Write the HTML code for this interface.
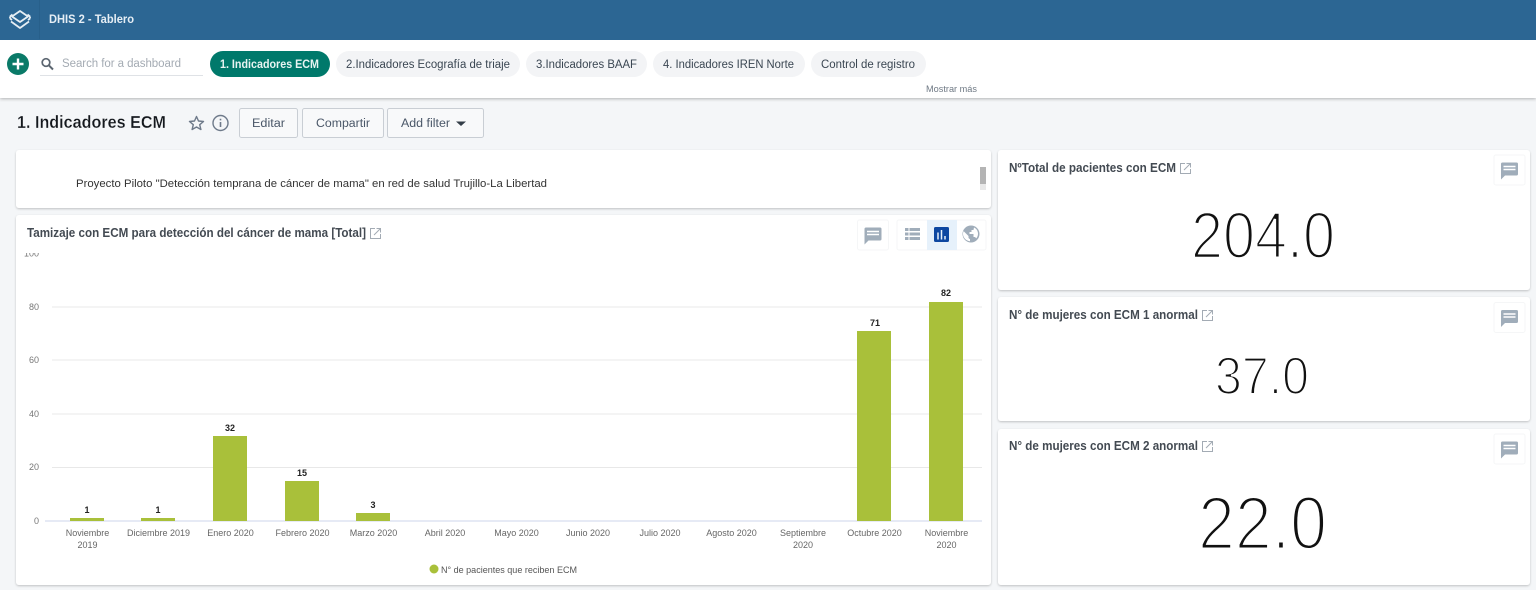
<!DOCTYPE html>
<html lang="es"><head><meta charset="utf-8"><title>DHIS 2 - Tablero</title>
<style>
html,body{margin:0;padding:0;background:#f4f6f8;width:1536px;height:590px;overflow:hidden}
svg{display:block}
text{font-family:"Liberation Sans",sans-serif}
.t{font-weight:bold;font-size:12.5px;fill:#434a52}
.c{font-size:11.5px;fill:#3a4652}
.b{font-size:11.5px;fill:#4a5768}
.x{font-size:9px;fill:#666;text-anchor:middle}
.y{font-size:9px;fill:#777;text-anchor:end}
.v{font-size:9px;font-weight:bold;fill:#222;text-anchor:middle}
.n{fill:#111;stroke:#fff;paint-order:normal}
</style></head><body>
<svg width="1536" height="590" viewBox="0 0 1536 590" xmlns="http://www.w3.org/2000/svg">
<defs>
<filter id="s" x="-2%" y="-5%" width="104%" height="110%"><feDropShadow dx="0" dy="1" stdDeviation="1" flood-color="#000" flood-opacity=".22"/></filter>
<filter id="h" x="-1%" y="-20%" width="102%" height="140%"><feDropShadow dx="0" dy="1" stdDeviation="1.5" flood-color="#000" flood-opacity=".28"/></filter>
<g id="ext" fill="none" stroke="#a3abb4" stroke-width="1"><path d="M5 .5H.5v10h10V6"/><path d="M4 7 10 1M6.500.5h4v4"/></g>
<g id="cm"><rect x="-15.500" y="-15" width="31" height="30" rx="2" fill="#fff" stroke="#f5f6f7"/><path d="M-7-7.500H7A1.500 1.500 0 0 1 8.500-6V4A1.500 1.500 0 0 1 7 5.500H-4.500L-8.500 9.500V-6A1.500 1.500 0 0 1-7-7.500Z" fill="#a0adba"/><path d="M-6-3.500H6M-6-.5H6" stroke="#fff" stroke-width="1.400"/></g>
</defs>
<rect width="1536" height="590" fill="#f4f6f8"/>
<rect y="40" width="1536" height="58" fill="#fff" filter="url(#h)"/>
<rect width="1536" height="40" fill="#2c6693"/>
<rect x="39" width="1" height="39" fill="#28608b"/>
<g fill="none" stroke="#e6eef4" stroke-width="1.800" stroke-linejoin="round"><path d="M20 11 28 16.500 20 22 12 16.500Z"/><path d="M12.500 14.500 10 16.500M27.500 14.500 30 16.500M10 16.500V18.500M30 16.500V18.500M10 18.500 12 20M30 18.500 28 20M11 21.500 20 28 29 21.500"/></g>
<text x="49" y="23" font-size="11.500" font-weight="bold" fill="#e6eef5" textLength="85" lengthAdjust="spacingAndGlyphs">DHIS 2 - Tablero</text>

<circle cx="18" cy="64" r="11" fill="#0a7a68"/><path d="M18 58.500v11M12.500 64h11" stroke="#fff" stroke-width="2.400"/>
<circle cx="46" cy="62.500" r="3.800" fill="none" stroke="#5b6570" stroke-width="1.700"/><path d="M48.800 65.300 53 69.500" stroke="#5b6570" stroke-width="2"/>
<text x="62" y="67" font-size="11.500" fill="#a4abb3" textLength="119" lengthAdjust="spacing">Search for a dashboard</text>
<rect x="40" y="75" width="163" height="1" fill="#dfe2e6"/>

<rect x="210" y="51" width="120" height="26" rx="13" fill="#00796b"/>
<text x="220" y="68" font-size="11.500" font-weight="bold" fill="#e8f4f2" textLength="99" lengthAdjust="spacingAndGlyphs">1. Indicadores ECM</text>
<rect x="336" y="51" width="184" height="26" rx="13" fill="#f3f4f6"/>
<text x="346" y="68" class="c" textLength="164" lengthAdjust="spacingAndGlyphs">2.Indicadores Ecografía de triaje</text>
<rect x="526" y="51" width="121" height="26" rx="13" fill="#f3f4f6"/>
<text x="536" y="68" class="c" textLength="101" lengthAdjust="spacingAndGlyphs">3.Indicadores BAAF</text>
<rect x="653" y="51" width="152" height="26" rx="13" fill="#f3f4f6"/>
<text x="663" y="68" class="c" textLength="131" lengthAdjust="spacingAndGlyphs">4. Indicadores IREN Norte</text>
<rect x="811" y="51" width="115" height="26" rx="13" fill="#f3f4f6"/>
<text x="821" y="68" class="c" textLength="94" lengthAdjust="spacingAndGlyphs">Control de registro</text>
<text x="926" y="92" font-size="9.500" fill="#6f7984" textLength="51" lengthAdjust="spacingAndGlyphs">Mostrar más</text>

<text x="17" y="128" font-size="17.500" font-weight="bold" fill="#14181d" stroke="#f4f6f8" stroke-width=".25" textLength="149" lengthAdjust="spacingAndGlyphs">1. Indicadores ECM</text>
<path d="M196.500 116.500 198.500 121 203.500 121.500 199.700 124.700 200.900 129.500 196.500 127 192.100 129.500 193.300 124.700 189.500 121.500 194.500 121Z" fill="none" stroke="#6e7a8a" stroke-width="1.400" stroke-linejoin="round"/>
<circle cx="220.500" cy="123" r="7.500" fill="none" stroke="#6e7a8a" stroke-width="1.400"/><path d="M220.500 122v5M220.500 118.800v1.600" stroke="#6e7a8a" stroke-width="1.600"/>

<rect x="239.500" y="108.500" width="58" height="29" rx="2" fill="#f8f9fa" stroke="#c9ced4"/>
<text x="252" y="127" class="b" textLength="33" lengthAdjust="spacingAndGlyphs">Editar</text>
<rect x="302.500" y="108.500" width="81" height="29" rx="2" fill="#f8f9fa" stroke="#c9ced4"/>
<text x="316" y="127" class="b" textLength="54" lengthAdjust="spacingAndGlyphs">Compartir</text>
<rect x="387.500" y="108.500" width="96" height="29" rx="2" fill="#f8f9fa" stroke="#c9ced4"/>
<text x="401" y="127" class="b" textLength="49" lengthAdjust="spacingAndGlyphs">Add filter</text>
<path d="M456 121.500h10l-5 4.500Z" fill="#333d47"/>

<rect x="16" y="150" width="975" height="58" rx="3" fill="#fff" filter="url(#s)"/>
<text x="76" y="187" font-size="10.800" fill="#333" textLength="471" lengthAdjust="spacingAndGlyphs">Proyecto Piloto "Detección temprana de cáncer de mama" en red de salud Trujillo-La Libertad</text>
<rect x="980" y="167" width="6" height="23" fill="#e8e8e8"/><rect x="980" y="167" width="6" height="17" fill="#b4b4b4"/>

<rect x="16" y="215" width="975" height="370" rx="3" fill="#fff" filter="url(#s)"/>
<text x="27" y="237" class="t" textLength="339" lengthAdjust="spacingAndGlyphs">Tamizaje con ECM para detección del cáncer de mama [Total]</text>
<use href="#ext" x="370" y="228"/>
<use href="#cm" x="873" y="235"/>
<rect x="897" y="220" width="89" height="30" rx="2" fill="#fff" stroke="#f5f6f7"/>
<rect x="927" y="220" width="30" height="30" fill="#e6f1fb"/>
<g fill="#a0adba"><rect x="905" y="228" width="3.500" height="3"/><rect x="909.500" y="228" width="10.500" height="3"/><rect x="905" y="232.500" width="3.500" height="3"/><rect x="909.500" y="232.500" width="10.500" height="3"/><rect x="905" y="237" width="3.500" height="3"/><rect x="909.500" y="237" width="10.500" height="3"/></g>
<rect x="934" y="227" width="15" height="15" rx="1.500" fill="#0d47a1"/>
<path d="M938 232.500v7M941.500 230v9.500M945 236v3.500" stroke="#e6f1fb" stroke-width="1.500"/>
<circle cx="971" cy="234" r="8.500" fill="#a0adba"/>
<path d="M963.500 231 968.500 236v1.500c0 1 1 1.500 1.500 1.500v2.300c-3.500-.4-7-3.400-7-7.300 0-.9.100-1.700.5-2.500ZM974 227.500c2.300 1 4 3.400 4 6.200 0 1.800-.7 3.500-1.900 4.700-.3-.7-.9-1.400-1.600-1.400h-1v-3h-4v-2h2v-2h2Z" fill="#fff"/>

<g fill="#e8e8e8"><rect x="52" y="306.500" width="930" height="1"/><rect x="52" y="359.500" width="930" height="1"/><rect x="52" y="413.500" width="930" height="1"/><rect x="52" y="467" width="930" height="1"/></g>
<rect x="45" y="520.500" width="937" height="1" fill="#ccd6eb"/>
<svg x="20" y="253" width="30" height="10" overflow="hidden"><text x="19" y="3.500" class="y">100</text></svg>
<text x="39" y="310" class="y">80</text><text x="39" y="363" class="y">60</text><text x="39" y="417" class="y">40</text><text x="39" y="470" class="y">20</text><text x="39" y="524" class="y">0</text>

<g fill="#a9c03a">
<rect x="70" y="518" width="34" height="3"/><rect x="141" y="518" width="34" height="3"/>
<rect x="213" y="436" width="34" height="85"/><rect x="285" y="481" width="34" height="40"/>
<rect x="356" y="513" width="34" height="8"/><rect x="857" y="331" width="34" height="190"/>
<rect x="929" y="302" width="34" height="219"/>
</g>
<text x="87" y="513" class="v">1</text><text x="158" y="513" class="v">1</text><text x="230" y="431" class="v">32</text><text x="302" y="476" class="v">15</text><text x="373" y="508" class="v">3</text><text x="875" y="326" class="v">71</text><text x="946" y="296" class="v">82</text>

<text x="87.500" y="536" class="x">Noviembre</text><text x="87.500" y="548" class="x">2019</text>
<text x="158.500" y="536" class="x">Diciembre 2019</text>
<text x="230.500" y="536" class="x">Enero 2020</text>
<text x="302.500" y="536" class="x">Febrero 2020</text>
<text x="373.500" y="536" class="x">Marzo 2020</text>
<text x="445" y="536" class="x">Abril 2020</text>
<text x="516.500" y="536" class="x">Mayo 2020</text>
<text x="588" y="536" class="x">Junio 2020</text>
<text x="660" y="536" class="x">Julio 2020</text>
<text x="731.500" y="536" class="x">Agosto 2020</text>
<text x="803" y="536" class="x">Septiembre</text><text x="803" y="548" class="x">2020</text>
<text x="874.500" y="536" class="x">Octubre 2020</text>
<text x="946.500" y="536" class="x">Noviembre</text><text x="946.500" y="548" class="x">2020</text>
<circle cx="434" cy="569" r="4.500" fill="#a9c03a"/>
<text x="441" y="573" font-size="9.500" fill="#555" textLength="136" lengthAdjust="spacingAndGlyphs">N° de pacientes que reciben ECM</text>

<rect x="998" y="150" width="532" height="140" rx="3" fill="#fff" filter="url(#s)"/>
<text x="1009" y="172" class="t" textLength="167" lengthAdjust="spacingAndGlyphs">NºTotal de pacientes con ECM</text>
<use href="#ext" x="1180" y="163"/>
<use href="#cm" x="1509.500" y="170"/>
<text x="1191" y="258" class="n" font-size="66" stroke-width="2.600" textLength="144" lengthAdjust="spacingAndGlyphs">204.0</text>

<rect x="998" y="297" width="532" height="124" rx="3" fill="#fff" filter="url(#s)"/>
<text x="1009" y="319" class="t" textLength="189" lengthAdjust="spacingAndGlyphs">N° de mujeres con ECM 1 anormal</text>
<use href="#ext" x="1202" y="310"/>
<use href="#cm" x="1509.500" y="317.500"/>
<text x="1215" y="394" class="n" font-size="53" stroke-width="2.100" textLength="94" lengthAdjust="spacingAndGlyphs">37.0</text>

<rect x="998" y="429" width="532" height="156" rx="3" fill="#fff" filter="url(#s)"/>
<text x="1009" y="450" class="t" textLength="189" lengthAdjust="spacingAndGlyphs">N° de mujeres con ECM 2 anormal</text>
<use href="#ext" x="1202" y="441"/>
<use href="#cm" x="1509.500" y="449"/>
<text x="1198" y="549" class="n" font-size="75" stroke-width="3" textLength="129" lengthAdjust="spacingAndGlyphs">22.0</text>
</svg>
</body></html>
